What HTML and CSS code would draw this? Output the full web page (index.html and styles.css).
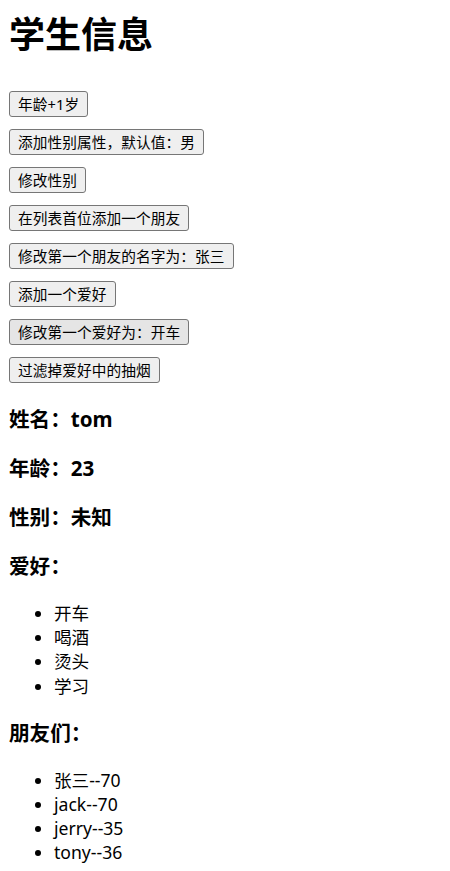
FILE: index.html
```html
<!DOCTYPE html>
<html lang="zh-CN">
<head>
<meta charset="utf-8">
<title>学生信息</title>
<link rel="stylesheet" href="styles.css">
</head>
<body>
<div class="page">
  <h1 class="title">学生信息</h1>
  <div class="actions">
    <button class="btn">年龄+1岁</button>
    <button class="btn">添加性别属性，默认值：男</button>
    <button class="btn">修改性别</button>
    <button class="btn">在列表首位添加一个朋友</button>
    <button class="btn">修改第一个朋友的名字为：张三</button>
    <button class="btn">添加一个爱好</button>
    <button class="btn btn-hover">修改第一个爱好为：开车</button>
    <button class="btn">过滤掉爱好中的抽烟</button>
  </div>
  <h3 class="field first">姓名：tom</h3>
  <h3 class="field">年龄：23</h3>
  <h3 class="field">性别：未知</h3>
  <h3 class="field">爱好：</h3>
  <ul class="list">
    <li>开车</li>
    <li>喝酒</li>
    <li>烫头</li>
    <li>学习</li>
  </ul>
  <h3 class="field">朋友们：</h3>
  <ul class="list">
    <li>张三--70</li>
    <li>jack--70</li>
    <li>jerry--35</li>
    <li>tony--36</li>
  </ul>
</div>
</body>
</html>
```

FILE: styles.css
```css
html, body {
  margin: 0;
  padding: 0;
  background: #ffffff;
}
body {
  font-family: "Noto Sans", "Noto Sans CJK SC", sans-serif;
  color: #000000;
  font-size: 17.6px;
}
.page {
  padding: 14px 9px 0;
}
.title {
  margin: 0 0 35px;
  font-size: 36px;
  line-height: 42px;
  font-weight: 700;
}
.actions {
  display: flex;
  flex-direction: column;
  align-items: flex-start;
  gap: 12px;
}
.btn {
  height: 26px;
  margin: 0;
  padding: 0 8px;
  font-family: "Noto Sans", "Noto Sans CJK SC", sans-serif;
  font-size: 14.67px;
  line-height: 24px;
  letter-spacing: 0.1px;
  color: #000000;
  background: #efefef;
  border: 1px solid #767676;
  border-radius: 3px;
}
.btn-hover {
  background: #e5e5e5;
}
.field {
  margin: 21px 0;
  font-size: 20.6px;
  line-height: 28px;
  font-weight: 700;
}
.field.first {
  margin-top: 22px;
}
.list {
  margin: 21px 0;
  padding-left: 45px;
  line-height: 24.2px;
}
```
